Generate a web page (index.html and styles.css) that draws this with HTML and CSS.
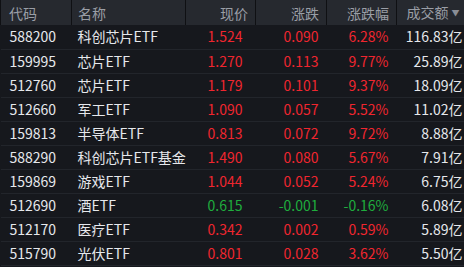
FILE: index.html
```html
<!DOCTYPE html>
<html lang="zh">
<head>
<meta charset="utf-8">
<link rel="stylesheet" href="styles.css">
</head>
<body>
<table class="quotes">
  <colgroup>
    <col class="c-code"><col class="c-name"><col class="c-price"><col class="c-chg"><col class="c-pct"><col class="c-vol">
  </colgroup>
  <thead>
    <tr>
      <th class="left">代码</th>
      <th class="left">名称</th>
      <th>现价</th>
      <th>涨跌</th>
      <th>涨跌幅</th>
      <th class="sort">成交额<span class="arrow">▼</span></th>
    </tr>
  </thead>
  <tbody>
    <tr><td class="code">588200</td><td class="name">科创芯片ETF</td><td class="up price">1.524</td><td class="up">0.090</td><td class="up">6.28%</td><td class="vol">116.83亿</td></tr>
    <tr><td class="code">159995</td><td class="name">芯片ETF</td><td class="up price">1.270</td><td class="up">0.113</td><td class="up">9.77%</td><td class="vol">25.89亿</td></tr>
    <tr><td class="code">512760</td><td class="name">芯片ETF</td><td class="up price">1.179</td><td class="up">0.101</td><td class="up">9.37%</td><td class="vol">18.09亿</td></tr>
    <tr><td class="code">512660</td><td class="name">军工ETF</td><td class="up price">1.090</td><td class="up">0.057</td><td class="up">5.52%</td><td class="vol">11.02亿</td></tr>
    <tr><td class="code">159813</td><td class="name">半导体ETF</td><td class="up price">0.813</td><td class="up">0.072</td><td class="up">9.72%</td><td class="vol">8.88亿</td></tr>
    <tr><td class="code">588290</td><td class="name">科创芯片ETF基金</td><td class="up price">1.490</td><td class="up">0.080</td><td class="up">5.67%</td><td class="vol">7.91亿</td></tr>
    <tr><td class="code">159869</td><td class="name">游戏ETF</td><td class="up price">1.044</td><td class="up">0.052</td><td class="up">5.24%</td><td class="vol">6.75亿</td></tr>
    <tr><td class="code">512690</td><td class="name">酒ETF</td><td class="down price">0.615</td><td class="down">-0.001</td><td class="down">-0.16%</td><td class="vol">6.08亿</td></tr>
    <tr><td class="code">512170</td><td class="name">医疗ETF</td><td class="up price">0.342</td><td class="up">0.002</td><td class="up">0.59%</td><td class="vol">5.89亿</td></tr>
    <tr><td class="code">515790</td><td class="name">光伏ETF</td><td class="up price">0.801</td><td class="up">0.028</td><td class="up">3.62%</td><td class="vol">5.50亿</td></tr>
  </tbody>
</table>
</body>
</html>
```

FILE: styles.css
```css
html, body {
  margin: 0;
  padding: 0;
  background: #16181d;
  overflow: hidden;
}
body {
  font-family: "Noto Sans CJK SC", "Noto Sans", sans-serif;
  font-size: 14px;
}
.quotes {
  width: 464px;
  border-collapse: collapse;
  table-layout: fixed;
}
.c-code { width: 71px; }
.c-name { width: 114px; }
.c-price { width: 70px; }
.c-chg { width: 71px; }
.c-pct { width: 70px; }
.c-vol { width: 68px; }

thead th {
  height: 24px;
  padding: 0 7px 0 0;
  background: #26292f;
  color: #9a9ea6;
  font-weight: normal;
  text-align: right;
  border-right: 1px solid #0f1013;
  line-height: 24px;
  box-sizing: border-box;
}
thead th:first-child { border-left: 1px solid #0f1013; }
thead th:last-child { border-right: none; padding-right: 5px; }
thead th.left { text-align: left; padding-left: 8px; }
thead th.left + th.left { padding-left: 6px; }
.arrow {
  font-size: 8px;
  color: #8a8e96;
  margin-left: 3px;
  vertical-align: 2px;
}
tbody td {
  height: 24px;
  padding: 0 8px 0 0;
  text-align: right;
  border-bottom: 1px solid #22252b;
  line-height: 23px;
  box-sizing: border-box;
  white-space: nowrap;
}
td.code { text-align: left; padding-left: 9px; color: #e6e8ec; }
td.name { text-align: left; padding-left: 6px; color: #e6e8ec; }
td.price { padding-right: 13px; }
td.vol { color: #e6e8ec; padding-right: 2px; }
.up { color: #f0262f; }
.down { color: #1fad3d; }
```
